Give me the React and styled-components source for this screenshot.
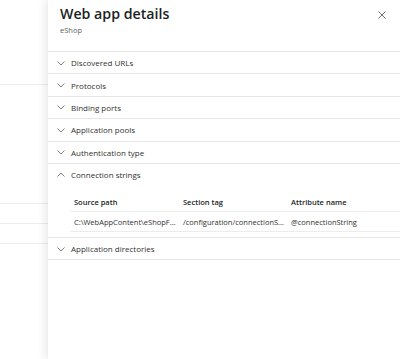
import styled, { createGlobalStyle } from "styled-components";

const GlobalStyle = createGlobalStyle`
    body {
        margin: 0;
        background: #ffffff;
        font-family: "Open Sans", "Noto Sans", sans-serif;
        color: #323130;
    }
`

const Page = styled.div`
    display: flex;
    height: 359px;
    width: 400px;
    overflow: hidden;
`

const Backdrop = styled.div`
    width: 48px;
    flex-shrink: 0;
    display: flex;
    flex-direction: column;
`

const BackLine = styled.div`
    height: 1px;
    margin-top: ${props => props.$gap}px;
    background: #ececec;
`

const Panel = styled.section`
    flex: 1;
    background: #ffffff;
    box-shadow: -3px 0 8px rgba(0, 0, 0, 0.09);
    display: flex;
    flex-direction: column;
`

const Header = styled.header`
    display: flex;
    justify-content: space-between;
    align-items: flex-start;
    height: 51px;
    box-sizing: border-box;
    padding: 4px 12px 0 12px;
`

const Title = styled.h2`
    margin: 0;
    font-size: 14.2px;
    font-weight: 600;
    line-height: 20px;
    color: #201f1e;
`

const Subtitle = styled.div`
    font-size: 7.5px;
    line-height: 10px;
    margin-top: 1px;
    color: #605e5c;
`

const CloseButton = styled.button`
    border: none;
    background: none;
    padding: 0;
    margin-top: 6px;
    margin-right: 1px;
    width: 10px;
    height: 10px;
    display: flex;
    cursor: pointer;
`

const Section = styled.div`
    border-top: 1px solid #e6e6e6;
    &:last-child {
        border-bottom: 1px solid #e6e6e6;
    }
`

const SectionHead = styled.div`
    display: flex;
    align-items: center;
    gap: 6px;
    height: 21.4px;
    padding-left: 9px;
    font-size: 8px;
    color: #323130;
`

const Chevron = styled.svg`
    width: 8px;
    height: 8px;
    flex-shrink: 0;
`

const Table = styled.div`
    margin: 6.6px 0 5px 22px;
    display: grid;
    grid-template-columns: 109px 108px 1fr;
    font-size: 7.5px;
`

const Cell = styled.div`
    height: 20px;
    line-height: 20px;
    padding: 0 3px 0 4px;
    box-sizing: border-box;
    border-bottom: 1px solid #ececec;
    white-space: nowrap;
    overflow: hidden;
    text-overflow: ellipsis;
    font-weight: ${props => props.$head ? 600 : 400};
    color: ${props => props.$head ? "#201f1e" : "#323130"};
`

const sections = [
    { name: "Discovered URLs" },
    { name: "Protocols" },
    { name: "Binding ports" },
    { name: "Application pools" },
    { name: "Authentication type" },
    {
        name: "Connection strings",
        open: true,
        rows: [["C:\\WebAppContent\\eShopForWeb\\web.config", "/configuration/connectionStrings/add", "@connectionString"]]
    },
    { name: "Application directories" },
]

const ChevronIcon = ({ open }) => (
    <Chevron viewBox="0 0 8 8">
        <path
            d={open ? "M0.5 5.5 L4 2 L7.5 5.5" : "M0.5 2.5 L4 6 L7.5 2.5"}
            fill="none"
            stroke="#605e5c"
            strokeWidth="0.8"
        />
    </Chevron>
)

const App = () => {
    return (
        <Page>
            <GlobalStyle />
            <Backdrop>
                <BackLine $gap={84} />
                <BackLine $gap={118} />
                <BackLine $gap={19} />
                <BackLine $gap={19} />
            </Backdrop>
            <Panel>
                <Header>
                    <div>
                        <Title>Web app details</Title>
                        <Subtitle>eShop</Subtitle>
                    </div>
                    <CloseButton aria-label="Close">
                        <svg viewBox="0 0 10 10" width="10" height="10">
                            <path d="M1.5 1.5 L8.5 8.5 M8.5 1.5 L1.5 8.5" stroke="#605e5c" strokeWidth="0.9" fill="none" />
                        </svg>
                    </CloseButton>
                </Header>
                <div>
                    {sections.map((section) => (
                        <Section key={section.name}>
                            <SectionHead>
                                <ChevronIcon open={section.open} />
                                {section.name}
                            </SectionHead>
                            {section.open && (
                                <Table>
                                    <Cell $head>Source path</Cell>
                                    <Cell $head>Section tag</Cell>
                                    <Cell $head>Attribute name</Cell>
                                    {section.rows.map((row, i) =>
                                        row.map((value, j) => <Cell key={i + "-" + j}>{value}</Cell>)
                                    )}
                                </Table>
                            )}
                        </Section>
                    ))}
                </div>
            </Panel>
        </Page>
    );
}

export default App;
